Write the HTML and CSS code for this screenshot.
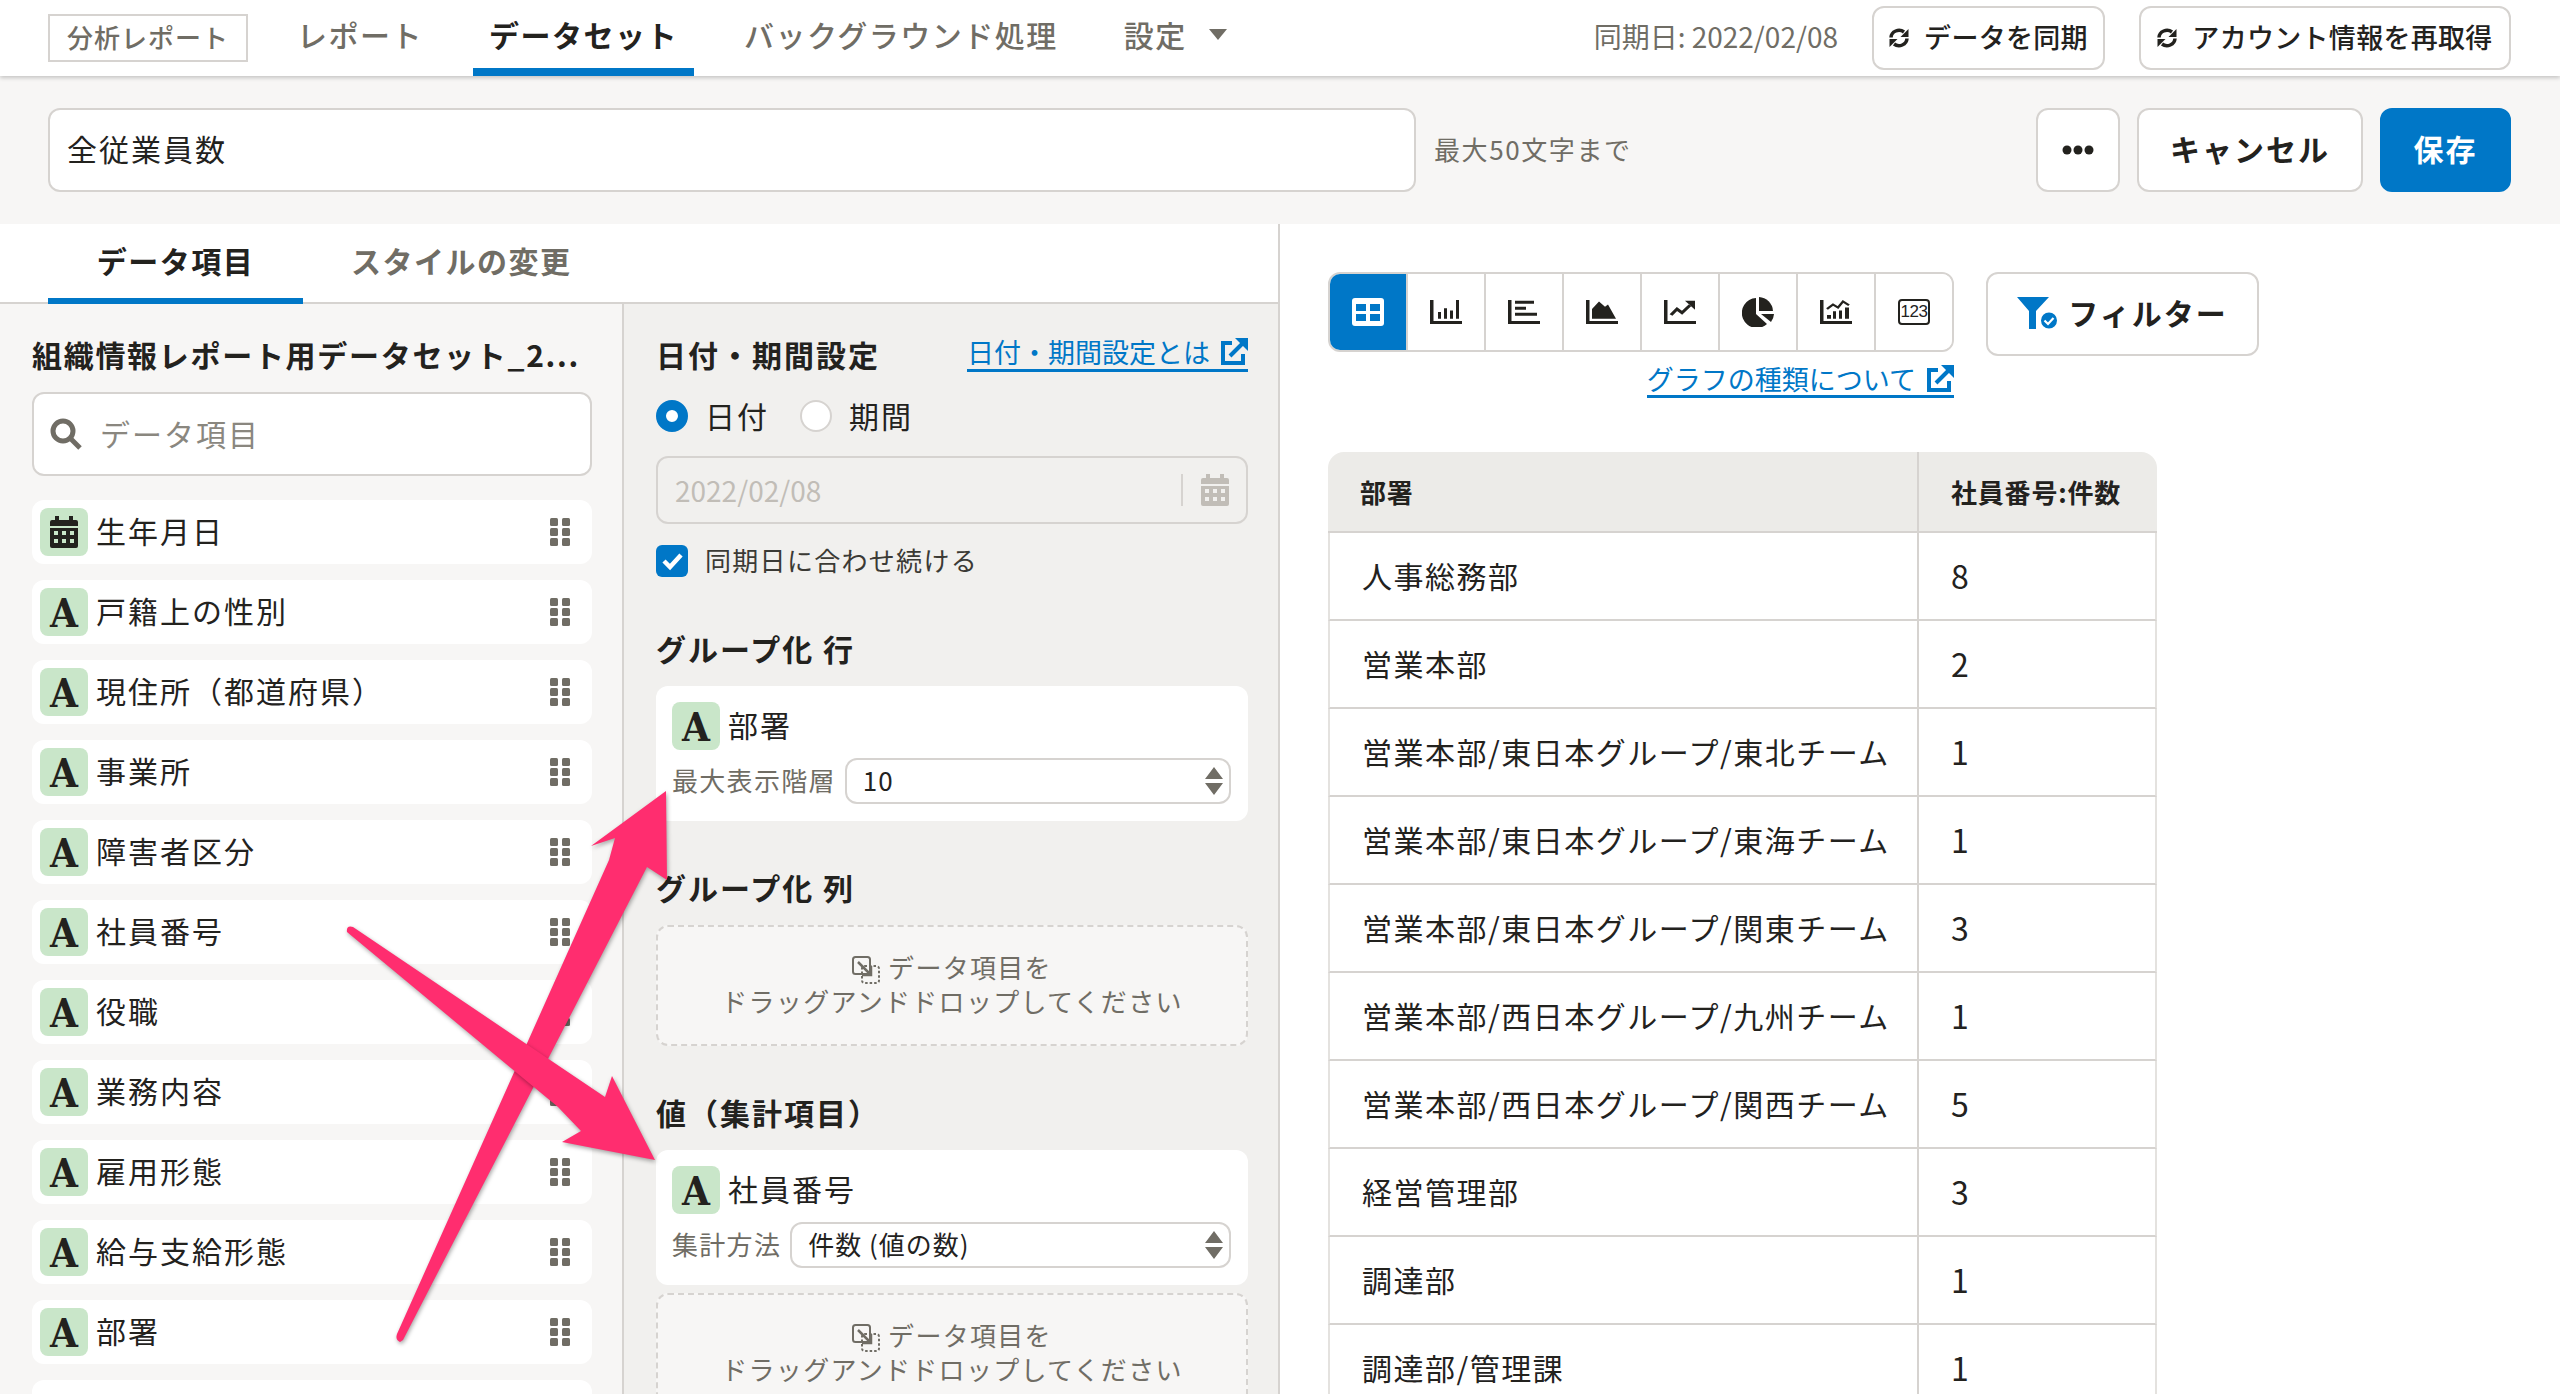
FILE: index.html
```html
<!DOCTYPE html>
<html lang="ja">
<head>
<meta charset="utf-8">
<title>全従業員数</title>
<link rel="stylesheet" href="styles.css">
</head>
<body>
<svg width="0" height="0" class="defs">
  <defs>
    <symbol id="i-ext" viewBox="0 0 28 28"><path d="M12 5H3v20h20v-9" fill="none" stroke="currentColor" stroke-width="4"/><path d="M10 18 22 6" fill="none" stroke="currentColor" stroke-width="4"/><path d="M15 0h13v13z" fill="currentColor"/></symbol>
    <symbol id="i-sync" viewBox="0 0 20 20"><path d="M2 9.500A8 7.500 0 0 1 15 4M18 10.500A8 7.500 0 0 1 5 16" fill="none" stroke="currentColor" stroke-width="3.500"/><path d="M19.500 1v8h-8zM.5 19v-8h8z" fill="currentColor"/></symbol>
    <symbol id="i-cal" viewBox="0 0 28 32"><path d="M5 0h4v4h10V0h4v4h3a2 2 0 0 1 2 2v4H0V6a2 2 0 0 1 2-2h3z" fill="currentColor"/><path fill-rule="evenodd" d="M0 12h28v18a2 2 0 0 1-2 2H2a2 2 0 0 1-2-2zM4 15v4h4v-4zm8 0v4h4v-4zm8 0v4h4v-4zM4 23v4h4v-4zm8 0v4h4v-4zm8 0v4h4v-4z" fill="currentColor"/></symbol>
    <symbol id="i-grip" viewBox="0 0 20 28"><g fill="currentColor"><rect width="8" height="8" rx="1.500"/><rect x="12" width="8" height="8" rx="1.500"/><rect y="10" width="8" height="8" rx="1.500"/><rect x="12" y="10" width="8" height="8" rx="1.500"/><rect y="20" width="8" height="8" rx="1.500"/><rect x="12" y="20" width="8" height="8" rx="1.500"/></g></symbol>
    <symbol id="i-updown" viewBox="0 0 18 28"><path d="M9 0l9 12H0zM0 16h18L9 28z" fill="currentColor"/></symbol>
    <symbol id="i-drop" viewBox="0 0 28 28"><rect x="1" y="1" width="17" height="17" rx="2.500" fill="none" stroke="currentColor" stroke-width="2"/><rect x="10" y="10" width="17" height="17" rx="2.500" fill="none" stroke="currentColor" stroke-width="2" stroke-dasharray="2.500 2"/><path d="M6 6l12 12M19 10v9h-9" fill="none" stroke="currentColor" stroke-width="2.500"/></symbol>
  </defs>
</svg>

<div class="app">
  <header class="topbar">
    <div class="brand">分析レポート</div>
    <nav class="nav">
      <a class="nav-item">レポート</a>
      <a class="nav-item nav-active">データセット</a>
      <a class="nav-item">バックグラウンド処理</a>
      <a class="nav-item">設定<span class="caret"></span></a>
    </nav>
    <div class="sync-date">同期日: 2022/02/08</div>
    <button class="btn-small btn-sync"><svg class="ico-sync"><use href="#i-sync"/></svg>データを同期</button>
    <button class="btn-small btn-account"><svg class="ico-sync"><use href="#i-sync"/></svg>アカウント情報を再取得</button>
  </header>

  <section class="band">
    <div class="name-input">全従業員数</div>
    <div class="hint">最大50文字まで</div>
    <button class="btn-big btn-more"><svg class="ico-dots" viewBox="0 0 32 10"><circle cx="5" cy="5" r="4.500"/><circle cx="16" cy="5" r="4.500"/><circle cx="27" cy="5" r="4.500"/></svg></button>
    <button class="btn-big btn-cancel">キャンセル</button>
    <button class="btn-big btn-save">保存</button>
  </section>

  <main class="main">
    <div class="left">
      <div class="tabs">
        <a class="tab tab-active">データ項目</a>
        <a class="tab">スタイルの変更</a>
      </div>
      <div class="panes">
        <aside class="fields">
          <h2 class="fields-title">組織情報レポート用データセット_2...</h2>
          <div class="search">
            <svg class="ico-search" viewBox="0 0 32 32"><circle cx="13" cy="13" r="10" fill="none" stroke="currentColor" stroke-width="5"/><path d="M20 20l10 10" stroke="currentColor" stroke-width="5"/></svg>
            <span>データ項目</span>
          </div>
          <ul class="field-list">
            <li class="field"><span class="badge"><svg class="ico-cal-badge"><use href="#i-cal"/></svg></span><span class="field-name">生年月日</span><svg class="grip"><use href="#i-grip"/></svg></li>
            <li class="field"><span class="badge">A</span><span class="field-name">戸籍上の性別</span><svg class="grip"><use href="#i-grip"/></svg></li>
            <li class="field"><span class="badge">A</span><span class="field-name">現住所（都道府県）</span><svg class="grip"><use href="#i-grip"/></svg></li>
            <li class="field"><span class="badge">A</span><span class="field-name">事業所</span><svg class="grip"><use href="#i-grip"/></svg></li>
            <li class="field"><span class="badge">A</span><span class="field-name">障害者区分</span><svg class="grip"><use href="#i-grip"/></svg></li>
            <li class="field"><span class="badge">A</span><span class="field-name">社員番号</span><svg class="grip"><use href="#i-grip"/></svg></li>
            <li class="field"><span class="badge">A</span><span class="field-name">役職</span><svg class="grip"><use href="#i-grip"/></svg></li>
            <li class="field"><span class="badge">A</span><span class="field-name">業務内容</span><svg class="grip"><use href="#i-grip"/></svg></li>
            <li class="field"><span class="badge">A</span><span class="field-name">雇用形態</span><svg class="grip"><use href="#i-grip"/></svg></li>
            <li class="field"><span class="badge">A</span><span class="field-name">給与支給形態</span><svg class="grip"><use href="#i-grip"/></svg></li>
            <li class="field"><span class="badge">A</span><span class="field-name">部署</span><svg class="grip"><use href="#i-grip"/></svg></li>
            <li class="field"></li>
          </ul>
        </aside>

        <section class="config">
          <div class="config-head">
            <h3 class="config-title">日付・期間設定</h3>
            <a class="link">日付・期間設定とは<svg class="ico-ext"><use href="#i-ext"/></svg></a>
          </div>
          <div class="radios">
            <span class="radio radio-on"></span><span class="radio-label">日付</span>
            <span class="radio"></span><span class="radio-label">期間</span>
          </div>
          <div class="date-input">
            <span class="date-value">2022/02/08</span>
            <span class="date-sep"></span>
            <svg class="ico-cal-date"><use href="#i-cal"/></svg>
          </div>
          <div class="check-row">
            <span class="check"><svg viewBox="0 0 32 32"><path d="M8 16l6 6 11-12" fill="none" stroke="#fff" stroke-width="4.500"/></svg></span>
            <span class="check-label">同期日に合わせ続ける</span>
          </div>

          <h3 class="config-title sec-row">グループ化 行</h3>
          <div class="card">
            <div class="card-head"><span class="badge">A</span><span class="field-name">部署</span></div>
            <div class="card-row">
              <span class="card-label">最大表示階層</span>
              <div class="select"><span>10</span><svg class="ico-updown"><use href="#i-updown"/></svg></div>
            </div>
          </div>

          <h3 class="config-title sec-col">グループ化 列</h3>
          <div class="dropzone">
            <div class="drop-line"><svg class="ico-drop"><use href="#i-drop"/></svg>データ項目を</div>
            <div class="drop-line">ドラッグアンドドロップしてください</div>
          </div>

          <h3 class="config-title sec-val">値（集計項目）</h3>
          <div class="card">
            <div class="card-head"><span class="badge">A</span><span class="field-name">社員番号</span></div>
            <div class="card-row">
              <span class="card-label">集計方法</span>
              <div class="select"><span>件数 (値の数)</span><svg class="ico-updown"><use href="#i-updown"/></svg></div>
            </div>
          </div>
          <div class="dropzone dropzone-2">
            <div class="drop-line"><svg class="ico-drop"><use href="#i-drop"/></svg>データ項目を</div>
            <div class="drop-line">ドラッグアンドドロップしてください</div>
          </div>
        </section>
      </div>
    </div>

    <div class="right">
      <div class="toolbar">
        <div class="chart-col">
          <div class="chart-group">
            <button class="chart-btn chart-active"><svg viewBox="0 0 32 28" class="ico-chart ico-table"><rect width="32" height="28" rx="3" fill="#fff"/><g fill="#0077c7"><rect x="4" y="6" width="10" height="7"/><rect x="18" y="6" width="10" height="7"/><rect x="4" y="16" width="10" height="7"/><rect x="18" y="16" width="10" height="7"/></g></svg></button>
            <button class="chart-btn"><svg viewBox="0 0 32 32" preserveAspectRatio="none" class="ico-chart"><path d="M0 0h3.500v28H32v4H0zM8 16h3v9H8zM14 11h3v14h-3zM20 14h3v11h-3zM26 0h3v25h-3z"/></svg></button>
            <button class="chart-btn"><svg viewBox="0 0 32 32" preserveAspectRatio="none" class="ico-chart"><path d="M0 0h3.500v28H32v4H0zM7 1h19v4H7zM7 9h11v4H7zM7 17h22v4H7z"/></svg></button>
            <button class="chart-btn"><svg viewBox="0 0 32 32" preserveAspectRatio="none" class="ico-chart"><path d="M0 0h3.500v28H32v4H0zM6 25V12l7-10 6 7 3-3 8 19z"/></svg></button>
            <button class="chart-btn"><svg viewBox="0 0 32 32" preserveAspectRatio="none" class="ico-chart"><path d="M0 0h3.500v28H32v4H0z"/><path d="M7 20l6-8 5 5 8-10" fill="none" stroke="#23221e" stroke-width="3.500"/><path d="M21 1h10v12z"/></svg></button>
            <button class="chart-btn"><svg viewBox="0 0 32 30" class="ico-chart ico-pie" preserveAspectRatio="none"><path d="M14 1A15 15 0 1 0 25 27L14 17z"/><path d="M17 0a15 15 0 0 1 14 14H17z"/><path d="M19 17h13a15 15 0 0 1-3 8z"/></svg></button>
            <button class="chart-btn"><svg viewBox="0 0 32 32" preserveAspectRatio="none" class="ico-chart"><path d="M0 0h3.500v28H32v4H0zM7 20h4v5H7zM13 15h3v10h-3zM19 14h3v11h-3zM25 10h4v15h-4z"/><path d="M7 12l6-6 5 4 5-8 6 5" fill="none" stroke="#23221e" stroke-width="2.500"/></svg></button>
            <button class="chart-btn"><span class="num-icon">123</span></button>
          </div>
          <a class="link link-chart">グラフの種類について<svg class="ico-ext"><use href="#i-ext"/></svg></a>
        </div>
        <button class="btn-filter">
          <svg class="ico-filter" viewBox="0 0 41 32"><path d="M0 0h32L19 14v18h-7V14z" fill="#0077c7"/><circle cx="32" cy="23.500" r="9" fill="#0077c7" stroke="#fff" stroke-width="2"/><path d="M27.500 23.500l3.500 3.500 5.500-6" stroke="#fff" stroke-width="2.200" fill="none"/></svg>
          フィルター
        </button>
      </div>

      <table class="data-table">
        <colgroup><col class="col-a"><col class="col-b"></colgroup>
        <thead><tr><th>部署</th><th>社員番号:件数</th></tr></thead>
        <tbody>
          <tr><td>人事総務部</td><td>8</td></tr>
          <tr><td>営業本部</td><td>2</td></tr>
          <tr><td>営業本部/東日本グループ/東北チーム</td><td>1</td></tr>
          <tr><td>営業本部/東日本グループ/東海チーム</td><td>1</td></tr>
          <tr><td>営業本部/東日本グループ/関東チーム</td><td>3</td></tr>
          <tr><td>営業本部/西日本グループ/九州チーム</td><td>1</td></tr>
          <tr><td>営業本部/西日本グループ/関西チーム</td><td>5</td></tr>
          <tr><td>経営管理部</td><td>3</td></tr>
          <tr><td>調達部</td><td>1</td></tr>
          <tr><td>調達部/管理課</td><td>1</td></tr>
        </tbody>
      </table>
    </div>
  </main>

  <svg class="arrows" viewBox="0 0 2560 1394" width="2560" height="1394">
    <path class="arrow" d="M400 1342Q395 1340 397 1334L609 860 L615 838 L591 846 L666 791 L667 880 L647 867 L403 1340Z"/>
    <path class="arrow" d="M347 932Q346 925 353 927L605 1097 L612 1076 L655 1160 L562 1142 L581 1131 L558 1107Z"/>
  </svg>
</div>
</body>
</html>
```
FILE: styles.css
```css
* { box-sizing: border-box; }
html, body { margin: 0; padding: 0; background: #fff; }
body {
  font-family: "Noto Sans CJK JP", "Noto Sans", sans-serif;
  font-size: 30px;
  color: #23221e;
  letter-spacing: 2px;
}
button { font: inherit; letter-spacing: inherit; color: inherit; cursor: pointer; padding: 0; }
h2, h3, ul { margin: 0; padding: 0; list-style: none; }
.defs { position: absolute; }
.app { width: 2560px; height: 1394px; overflow: hidden; position: relative; display: flex; flex-direction: column; }

.topbar {
  height: 76px; flex: none; display: flex; align-items: center; padding: 0 49px 0 48px;
  background: #fff; box-shadow: 0 2px 4px rgba(0,0,0,.2); position: relative; z-index: 2;
}
.brand {
  width: 200px; height: 48px; border: 2px solid #d6d3d0; display: flex; align-items: center; justify-content: center; padding-bottom: 3px;
  font-size: 26px; font-weight: 500; color: #706d65; letter-spacing: 1px;
}
.nav { display: flex; height: 76px; margin-left: 33px; flex: 1; }
.nav-item {
  display: flex; align-items: center; padding: 0 16px; margin-right: 34px; height: 76px;
  font-weight: 500; color: #706d65; border-bottom: 8px solid transparent; letter-spacing: 1.500px;
}
.nav-active { color: #23221e; font-weight: 700; border-bottom-color: #0077c7; }
.caret { width: 0; height: 0; border: 9.500px solid transparent; border-top: 11px solid #706d65; border-bottom: 0; margin-left: 22px; }
.sync-date { font-size: 28px; letter-spacing: 0; color: #706d65; margin-right: 34px; padding-bottom: 4px; }
.btn-small {
  height: 64px; border: 2px solid #d6d3d0; border-radius: 12px; background: #fff; display: flex; align-items: center; justify-content: center;
  font-size: 27px; font-weight: 500; letter-spacing: 0.300px; padding-bottom: 4px;
}
.btn-sync { width: 233px; margin-right: 34px; }
.btn-account { width: 372px; }
.ico-sync { width: 20px; height: 20px; margin-right: 15px; margin-top: 3px; }

.band { height: 148px; flex: none; background: #f7f6f5; display: flex; align-items: center; padding: 8px 49px 8px 48px; }
.name-input {
  width: 1368px; height: 84px; background: #fff; border: 2px solid #d6d3d0; border-radius: 12px;
  display: flex; align-items: center; padding: 0 0 5px 17px;
}
.hint { font-size: 26px; letter-spacing: 1.600px; color: #706d65; margin-left: 18px; flex: 1; padding-bottom: 4px; }
.btn-big { height: 84px; border: 2px solid #d6d3d0; border-radius: 12px; background: #fff; font-weight: 700; padding-bottom: 5px; }
.btn-more { width: 84px; margin-right: 17px; display: flex; align-items: center; justify-content: center; padding: 0; }
.ico-dots { width: 32px; height: 10px; fill: #23221e; }
.btn-cancel { width: 226px; margin-right: 17px; }
.btn-save { width: 131px; background: #0077c7; border-color: #0077c7; color: #fff; }

.main { flex: 1; display: flex; min-height: 0; }
.left { width: 1280px; flex: none; border-right: 2px solid #d6d3d0; display: flex; flex-direction: column; }
.tabs { height: 80px; flex: none; display: flex; padding-left: 48px; border-bottom: 2px solid #d6d3d0; background: #fff; }
.tab {
  height: 80px; display: flex; align-items: center; padding: 0 48px 2px; font-weight: 700; color: #706d65;
  border-bottom: 6px solid transparent; letter-spacing: 1.500px;
}
.tab-active { color: #23221e; border-bottom-color: #0077c7; width: 255px; justify-content: center; padding: 0 0 2px; }
.panes { flex: 1; display: flex; min-height: 0; }

.fields { width: 624px; flex: none; background: #f7f6f5; border-right: 2px solid #d6d3d0; padding: 30px 30px 0 32px; }
.fields-title { font-size: 30px; font-weight: 700; line-height: 40px; height: 44px; white-space: nowrap; letter-spacing: 1.700px; }
.search {
  height: 84px; margin-top: 14px; background: #fff; border: 2px solid #d6d3d0; border-radius: 12px;
  display: flex; align-items: center; padding-left: 16px; color: #8a877f;
}
.search span { padding-bottom: 3px; }
.ico-search { width: 32px; height: 32px; color: #706d65; margin-right: 18px; }
.field-list { margin-top: 24px; display: flex; flex-direction: column; gap: 16px; }
.field {
  height: 64px; flex: none; background: #fff; border-radius: 12px; display: flex; align-items: center; padding: 0 22px 0 8px;
}
.badge {
  width: 48px; height: 48px; flex: none; background: #c9e6c9; border-radius: 8px; display: flex; align-items: center; justify-content: center;
  font-family: "DejaVu Serif Condensed", "DejaVu Serif", serif; font-weight: 700; font-size: 40px; color: #23221e; letter-spacing: 0;
}
.field-name { margin-left: 8px; flex: 1; padding-bottom: 4px; }
.grip { width: 20px; height: 28px; color: #706d65; flex: none; }
.ico-cal-badge { width: 28px; height: 32px; }

.config { flex: 1; background: #f1f0ee; padding: 30px 30px 0 32px; }
.config-head { display: flex; justify-content: space-between; align-items: flex-start; height: 44px; }
.config-title { font-size: 30px; font-weight: 700; line-height: 40px; height: 44px; }
.link { color: #0077c7; font-size: 27px; letter-spacing: 0; border-bottom: 3px solid #0077c7; display: inline-flex; align-items: center; height: 38px; }
.ico-ext { width: 28px; height: 28px; margin-left: 10px; }
.radios { display: flex; align-items: center; margin-top: 22px; height: 32px; }
.radio { width: 32px; height: 32px; flex: none; border-radius: 50%; background: #fff; border: 2px solid #d6d3d0; }
.radio-on { border: 10px solid #0077c7; }
.radio-label { margin-left: 17px; margin-right: 31px; padding-bottom: 3px; }
.date-input {
  height: 68px; margin-top: 24px; background: #f1f0ee; border: 2px solid #d6d3d0; border-radius: 12px;
  display: flex; align-items: center; padding: 0 17px 0 17px;
}
.date-value { flex: 1; color: #c1bdb7; font-size: 28px; letter-spacing: 0; }
.date-sep { width: 2px; height: 32px; background: #d6d3d0; margin-right: 18px; }
.ico-cal-date { width: 28px; height: 32px; color: #c1bdb7; }
.check-row { display: flex; align-items: center; margin-top: 21px; height: 32px; font-size: 26px; letter-spacing: 1.300px; color: #3b3a35; }
.check-label { padding-bottom: 4px; }
.check { width: 32px; height: 32px; border-radius: 6px; background: #0077c7; margin-right: 17px; flex: none; }
.check svg { display: block; width: 32px; height: 32px; }
.sec-row { margin-top: 51px; }
.sec-col { margin-top: 46px; }
.sec-val { margin-top: 46px; }
.card { margin-top: 14px; height: 135px; background: #fff; border-radius: 12px; padding: 16px 17px 0 16px; }
.card-head { display: flex; align-items: center; height: 48px; }
.card-row { display: flex; align-items: center; margin-top: 8px; height: 46px; }
.card-label { font-size: 26px; letter-spacing: 1.300px; color: #706d65; margin-right: 9px; white-space: nowrap; padding-bottom: 3px; }
.select {
  flex: 1; height: 46px; background: #fff; border: 2px solid #d6d3d0; border-radius: 12px; display: flex; align-items: center; justify-content: space-between;
  padding: 0 6px 0 16px; font-size: 26px; letter-spacing: 1px;
}
.select span { padding-bottom: 3px; }
.ico-updown { width: 18px; height: 28px; color: #706d65; }
.dropzone {
  margin-top: 14px; height: 121px; background: #f7f6f5; border: 2px dashed #d6d3d0; border-radius: 12px;
  padding-top: 23px; display: flex; flex-direction: column; align-items: center; font-size: 26px; letter-spacing: 1.300px; color: #706d65;
}
.dropzone-2 { margin-top: 8px; }
.drop-line { line-height: 34px; display: flex; align-items: center; }
.ico-drop { width: 28px; height: 28px; margin-right: 8px; margin-top: 5px; }

.right { flex: 1; padding: 48px 0 0 48px; }
.toolbar { display: flex; align-items: flex-start; gap: 32px; }
.chart-col { display: flex; flex-direction: column; align-items: flex-end; }
.chart-group { display: flex; width: 626px; height: 80px; border: 2px solid #d6d3d0; border-radius: 12px; overflow: hidden; background: #fff; }
.chart-btn { width: 78px; flex: 1; border: 0; border-right: 2px solid #d6d3d0; background: #fff; display: flex; align-items: center; justify-content: center; }
.chart-btn:last-child { border-right: 0; }
.chart-active { background: #0077c7; }
.ico-chart { width: 32px; height: 24px; fill: #23221e; }
.ico-table { height: 28px; }
.ico-pie { height: 30px; }
.num-icon { width: 32px; height: 26px; border: 2.500px solid #23221e; border-radius: 4px; font-size: 17px; letter-spacing: -0.5px; line-height: 21px; font-family: "Liberation Sans", sans-serif; font-weight: 400; text-align: center; }
.link-chart { margin-top: 8px; padding-top: 2px; }
.btn-filter { width: 273px; height: 84px; border: 2px solid #d6d3d0; border-radius: 12px; background: #fff; font-weight: 700; display: flex; align-items: center; justify-content: center; padding-bottom: 4px; }
.ico-filter { width: 41px; height: 32px; margin-right: 10px; margin-top: 2px; }

.data-table { margin-top: 54px; width: 829px; border-collapse: separate; border-spacing: 0; table-layout: fixed; font-size: 30px; letter-spacing: 1.500px; }
.col-a { width: 589px; }
.data-table th { height: 81px; background: #ecebe8; text-align: left; font-size: 26px; letter-spacing: 0.800px; font-weight: 700; padding: 0 0 0 32px; border-bottom: 2px solid #d6d3d0; }
.data-table th:first-child { border-top-left-radius: 16px; }
.data-table th:last-child { border-top-right-radius: 16px; }
.data-table th + th { border-left: 2px solid #d6d3d0; }
.data-table td { height: 88px; padding: 0 0 3px 32px; border-bottom: 2px solid #d6d3d0; background: #fff; }
.data-table td:first-child { border-left: 2px solid #e4e2df; }
.data-table td + td { border-left: 2px solid #d6d3d0; border-right: 2px solid #e4e2df; font-size: 32px; }

.arrows { position: absolute; left: 0; top: 0; pointer-events: none; z-index: 5; }
.arrow { fill: #ff2d6f; filter: drop-shadow(1px 2px 2px rgba(0,0,0,.35)); }
```
